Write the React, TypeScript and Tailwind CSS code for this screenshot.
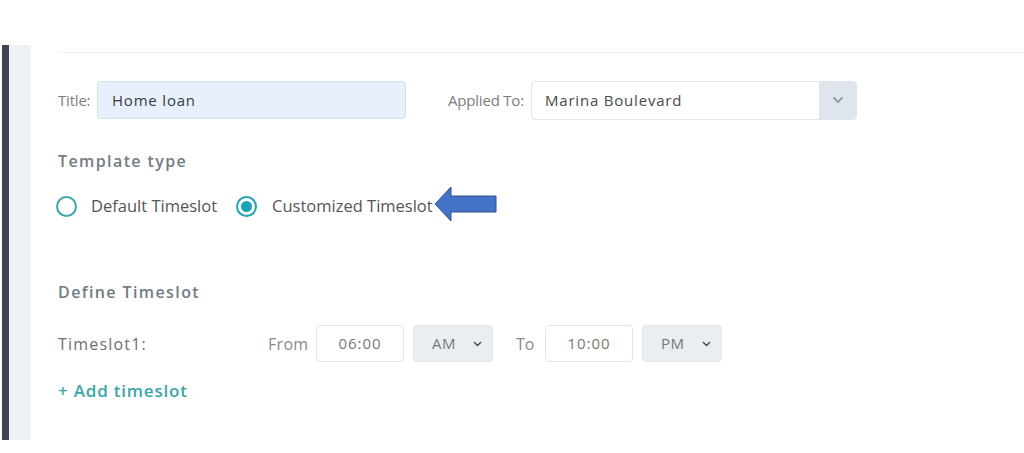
import React from "react";

function Chevron({ className = "" }: { className?: string }) {
  return (
    <svg viewBox="0 0 12 8" className={className} fill="none">
      <path d="M2 2l4 4 4-4" stroke="currentColor" strokeWidth="2.2" strokeLinecap="round" strokeLinejoin="round" />
    </svg>
  );
}

function Arrow() {
  return (
    <svg width="64" height="38" viewBox="0 0 64 38" className="block">
      <polygon
        points="1,19 17,2 17,11 62,11 62,27 17,27 17,36"
        fill="#4472c4"
        stroke="#2f528f"
        strokeWidth="1"
        strokeLinejoin="miter"
      />
    </svg>
  );
}

export default function App() {
  const f = { fontFamily: '"Open Sans", "Noto Sans", Arial, sans-serif' };
  return (
    <div className="w-[1024px] h-[453px] bg-white overflow-hidden" style={f}>
      <div className="h-[45px]" />
      <div className="flex h-[395px]">
        <div className="ml-[2px] w-[7px] bg-[#3e4750]" />
        <div className="w-[22px] bg-[#edf1f5]" />
        <div className="flex-1 pl-[27px] pt-[7px]">
          <div className="border-t border-[#eef0f2]">
            {/* Title row */}
            <div className="flex items-center mt-[28px] h-[38px]">
              <span className="text-[15px] text-[#7d7d7d] tracking-[-0.2px] w-[39px]">Title:</span>
              <div className="w-[309px] h-[38px] rounded-[4px] bg-[#e8f0fe] border border-[#d9dfe6] flex items-center pl-[14px] text-[15px] text-[#3a3a3a] tracking-[0.8px]">
                Home loan
              </div>
              <span className="ml-[42px] text-[15px] text-[#7d7d7d] tracking-[-0.2px] w-[83px]">Applied To:</span>
              <div className="w-[326px] h-[39px] rounded-[4px] border border-[#e2e5e8] flex overflow-hidden bg-white">
                <div className="flex-1 flex items-center pl-[13px] text-[15px] text-[#4a4a4a] tracking-[0.8px]">Marina Boulevard</div>
                <div className="w-[37px] bg-[#dfe5ec] flex items-center justify-center text-[#9aa3ad]">
                  <Chevron className="w-[12px] h-[8px]" />
                </div>
              </div>
            </div>

            {/* Template type */}
            <div className="mt-[32px] text-[16px] font-semibold text-[#737b82] leading-[20px] tracking-[1.4px]">Template type</div>

            <div className="flex items-center mt-[16px] h-[38px] -ml-[2px]">
              <div className="w-[21px] h-[21px] rounded-full border-[2px] border-[#3ea6a8] bg-white" />
              <span className="ml-[14px] text-[16.5px] text-[#555]">Default Timeslot</span>
              <div className="ml-[19px] w-[21px] h-[21px] rounded-full border-[2px] border-[#1ca3b4] bg-white flex items-center justify-center">
                <div className="w-[11px] h-[11px] rounded-full bg-[#1aa3b5]" />
              </div>
              <span className="ml-[15px] text-[16.5px] text-[#555]">Customized Timeslot</span>
              <div className="ml-[1px] -mt-[4px]">
                <Arrow />
              </div>
            </div>

            {/* Define Timeslot */}
            <div className="mt-[57px] text-[16px] font-semibold text-[#737b82] leading-[20px] tracking-[1.4px]">Define Timeslot</div>

            <div className="flex items-center mt-[23px] h-[37px] text-[15px] text-[#6f6f6f]">
              <span className="w-[210px] text-[16px] tracking-[1.2px]">Timeslot1:</span>
              <span className="text-[#8a8a8a] w-[48px] text-[16px] tracking-[0.3px]">From</span>
              <div className="w-[88px] h-[37px] rounded-[4px] border border-[#e2e5e8] flex items-center justify-center text-[15px] tracking-[1px] text-[#777]">06:00</div>
              <div className="ml-[9px] w-[80px] h-[37px] rounded-[4px] bg-[#e9eef2] border border-[#e2e7ec] flex items-center pl-[18px] pr-[10px] justify-between text-[15px] tracking-[0.5px] text-[#777]">
                <span>AM</span>
                <Chevron className="w-[9px] h-[6px] text-[#555]" />
              </div>
              <span className="ml-[23px] w-[29px] text-[#8a8a8a] text-[16px]">To</span>
              <div className="w-[88px] h-[37px] rounded-[4px] border border-[#e2e5e8] flex items-center justify-center text-[15px] tracking-[1px] text-[#777]">10:00</div>
              <div className="ml-[9px] w-[80px] h-[37px] rounded-[4px] bg-[#e9eef2] border border-[#e2e7ec] flex items-center pl-[18px] pr-[10px] justify-between text-[15px] tracking-[0.5px] text-[#777]">
                <span>PM</span>
                <Chevron className="w-[9px] h-[6px] text-[#555]" />
              </div>
            </div>

            <div className="mt-[16px] text-[17px] font-semibold text-[#3ba6a8] tracking-[0.8px]">+ Add timeslot</div>
          </div>
        </div>
      </div>
    </div>
  );
}
